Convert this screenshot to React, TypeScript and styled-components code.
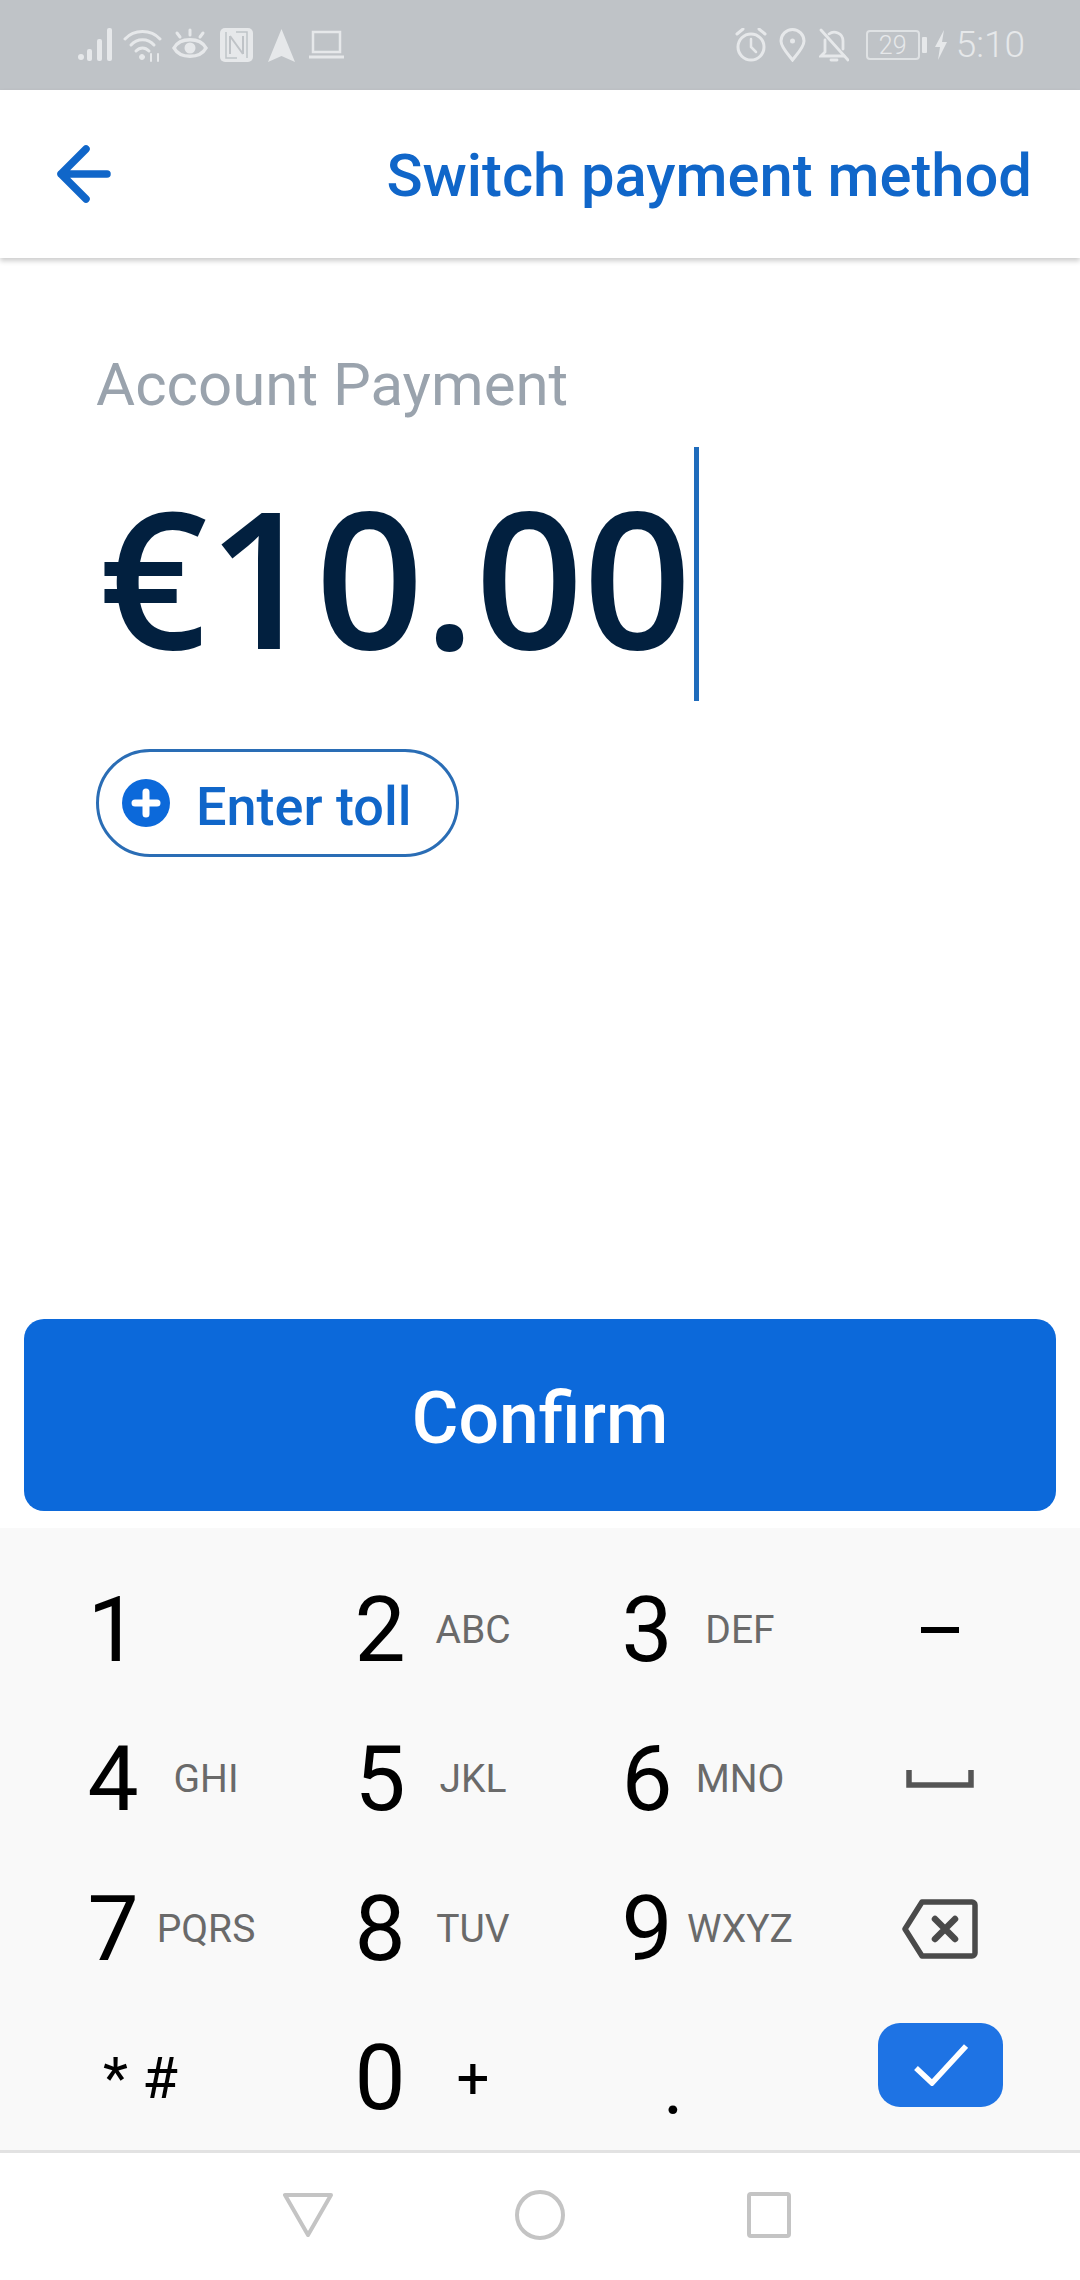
import React from "react";
import styled, { createGlobalStyle } from "styled-components";

const Global = createGlobalStyle`
  html, body { margin: 0; padding: 0; background: #fff; }
  * { box-sizing: border-box; }
  body { font-family: Roboto, "Liberation Sans", sans-serif; }
`;

const Page = styled.div`
  width: 1080px;
  height: 2280px;
  display: flex;
  flex-direction: column;
  overflow: hidden;
  background: #fff;
`;

const StatusBar = styled.div`
  height: 90px;
  flex: none;
  background: #bfc3c7;
  display: flex;
  align-items: center;
  justify-content: space-between;
  padding: 0 55px 0 78px;
  color: #e6e8ea;
`;

const StatusGroup = styled.div`
  display: flex;
  align-items: center;
  height: 36px;
`;

const StatusIcon = styled.svg<{ $ml?: number }>`
  display: block;
  flex: none;
  margin-left: ${(p) => p.$ml ?? 0}px;
`;

const Battery = styled.div`
  width: 54px;
  height: 30px;
  margin-left: 17px;
  border: 2px solid #dfe2e4;
  border-radius: 4px;
  display: flex;
  align-items: center;
  justify-content: center;
  font-size: 25px;
  font-weight: 300;
  color: #e6e8ea;
`;

const BatteryNub = styled.div`
  width: 5px;
  height: 16px;
  margin-left: 2px;
  background: #e6e8ea;
  border-radius: 1px;
`;

const Clock = styled.div`
  margin-left: 9px;
  font-size: 37px;
  font-weight: 300;
  line-height: 36px;
  color: #e6e8ea;
`;

const Header = styled.div`
  height: 168px;
  flex: none;
  display: flex;
  align-items: center;
  justify-content: space-between;
  padding: 0 48px 0 57px;
  box-shadow: 0 3px 5px rgba(0, 0, 0, 0.2);
  position: relative;
  background: #fff;
`;

const HeaderAction = styled.div`
  font-size: 59.7px;
  font-weight: 500;
  color: #1066c9;
  line-height: 64px;
  margin-top: 3px;
`;

const Main = styled.div`
  flex: 1;
  display: flex;
  flex-direction: column;
  align-items: flex-start;
  padding: 95px 0 0 96px;
`;

const AccountLabel = styled.div`
  font-size: 60px;
  line-height: 64px;
  font-weight: 400;
  color: #9aa3ad;
`;

const AmountRow = styled.div`
  display: flex;
  align-items: flex-start;
  margin-top: 30px;
  height: 254px;
`;

const Amount = styled.div`
  font-family: "Open Sans", "Noto Sans", sans-serif;
  font-size: 190px;
  font-weight: 600;
  line-height: 254px;
  color: #02203f;
  margin-left: 3px;
  letter-spacing: -0.5px;
  margin-top: 2px;
`;

const Caret = styled.div`
  width: 5px;
  height: 254px;
  background: #1f6cbc;
  margin-left: 3px;
`;

const TollPill = styled.div`
  margin-top: 48px;
  width: 363px;
  height: 108px;
  border: 3px solid #2a6db5;
  border-radius: 54px;
  display: flex;
  align-items: center;
  padding-left: 23px;
  gap: 26px;
`;

const TollLabel = styled.div`
  font-size: 54px;
  font-weight: 500;
  color: #1066c9;
  line-height: 60px;
  margin-top: 7px;
`;

const ConfirmWrap = styled.div`
  flex: none;
  padding: 0 24px;
  height: 209px;
`;

const ConfirmButton = styled.div`
  height: 192px;
  background: #0c69da;
  border-radius: 20px;
  display: flex;
  align-items: center;
  justify-content: center;
  color: #fff;
  font-size: 71.5px;
  font-weight: 500;
  padding-top: 6px;
`;

const Keypad = styled.div`
  flex: none;
  height: 622px;
  background: #f9f9f9;
  padding: 27px 0 0 66px;
  display: grid;
  grid-template-columns: 267px 267px 267px 146px;
  grid-auto-rows: 149.5px;
`;

const Key = styled.div`
  display: grid;
  grid-template-columns: 94px 92px;
  align-items: center;
  justify-items: center;
`;

const Digit = styled.div`
  font-size: 91px;
  line-height: 100px;
  color: #000;
`;

const Letters = styled.div<{ $symbol?: boolean }>`
  font-size: ${(p) => (p.$symbol ? 58 : 39)}px;
  color: ${(p) => (p.$symbol ? "#000" : "#6a6a6a")};
  line-height: 60px;
  white-space: nowrap;
`;

const SymbolKey = styled.div<{ $pl: number; $pt?: number; $size?: number }>`
  display: flex;
  align-items: center;
  padding-left: ${(p) => p.$pl}px;
  padding-top: ${(p) => p.$pt ?? 0}px;
  font-size: ${(p) => p.$size ?? 58}px;
  color: #000;
  white-space: nowrap;
`;

const ActionKey = styled.div`
  display: flex;
  align-items: center;
  justify-content: center;
`;

const EnterButton = styled.div`
  width: 125px;
  height: 84px;
  margin: 0 0 26px 1px;
  background: #1e73e4;
  border-radius: 22px;
  display: flex;
  align-items: center;
  justify-content: center;
`;

const NavBar = styled.div`
  flex: none;
  height: 130px;
  border-top: 3px solid #e2e2e2;
  display: flex;
  align-items: center;
  justify-content: center;
  gap: 182px;
  padding: 0 6px 3px 0;
`;

const keys = [
  ["1", ""],
  ["2", "ABC"],
  ["3", "DEF"],
];
const keys2 = [
  ["4", "GHI"],
  ["5", "JKL"],
  ["6", "MNO"],
];
const keys3 = [
  ["7", "PQRS"],
  ["8", "TUV"],
  ["9", "WXYZ"],
];

const Row = ({ items }: { items: string[][] }) => (
  <>
    {items.map(([d, l]) => (
      <Key key={d}>
        <Digit>{d}</Digit>
        <Letters>{l}</Letters>
      </Key>
    ))}
  </>
);

export default function App() {
  return (
    <Page>
      <Global />
      <StatusBar>
        <StatusGroup>
          <StatusIcon width="35" height="34" viewBox="0 0 35 34" fill="#e6e8ea">
            <circle cx="3" cy="29" r="3" />
            <rect x="9" y="21" width="5" height="12" rx="2" />
            <rect x="19" y="11" width="5" height="22" rx="2" />
            <rect x="29" y="0" width="5" height="33" rx="2" />
          </StatusIcon>
          <StatusIcon $ml={10} width="39" height="34" viewBox="0 0 39 34" fill="none" stroke="#e6e8ea" strokeWidth="3" strokeLinecap="round">
            <path d="M2 11 C11 1 28 1 37 11" />
            <path d="M8 17 C14 10 25 10 31 17" />
            <path d="M13 23 C17 19 22 19 26 23" />
            <circle cx="19" cy="29" r="2.5" fill="#e6e8ea" strokeWidth="1" />
            <path d="M28 26 v7 M35 26 v7" strokeWidth="2" />
          </StatusIcon>
          <StatusIcon $ml={10} width="36" height="34" viewBox="0 0 36 34" fill="none" stroke="#e6e8ea" strokeWidth="3.5" strokeLinecap="round">
            <path d="M2 20 C8 9 28 9 34 20 C28 31 8 31 2 20 Z" />
            <circle cx="18" cy="20" r="5.5" fill="#e6e8ea" strokeWidth="0" />
            <path d="M18 7 V2 M8 9 L5 5 M28 9 L31 5" strokeWidth="3" />
          </StatusIcon>
          <StatusIcon $ml={12} width="33" height="34" viewBox="0 0 33 34">
            <rect x="0" y="0" width="33" height="34" rx="5" fill="#e6e8ea" />
            <path d="M10 8 V26 M10 8 L23 26 M23 8 V26" stroke="#bfc3c7" strokeWidth="2" fill="none" />
            <path d="M6 4 V30 H17 M27 30 V4 H16" stroke="#bfc3c7" strokeWidth="1.5" fill="none" />
          </StatusIcon>
          <StatusIcon $ml={15} width="27" height="33" viewBox="0 0 27 33" fill="#e6e8ea">
            <path d="M13.5 0 L27 33 L13.5 27 L0 33 Z" />
          </StatusIcon>
          <StatusIcon $ml={14} width="35" height="30" viewBox="0 0 35 30" fill="none" stroke="#e6e8ea" strokeWidth="2.5">
            <rect x="4" y="2" width="27" height="20" />
            <path d="M0 27 H35" strokeWidth="3" />
          </StatusIcon>
        </StatusGroup>
        <StatusGroup>
          <StatusIcon width="32" height="34" viewBox="0 0 32 34" fill="none" stroke="#e6e8ea" strokeWidth="3" strokeLinecap="round">
            <circle cx="16" cy="19" r="13" />
            <path d="M16 11 V19 L21 24" strokeWidth="2.5" />
            <path d="M2 6 L8 1 M30 6 L24 1" />
          </StatusIcon>
          <StatusIcon $ml={12} width="27" height="34" viewBox="0 0 27 34" fill="none" stroke="#e6e8ea" strokeWidth="3">
            <path d="M13.5 32 C8 25 2 19 2 13 A11.5 11.5 0 0 1 25 13 C25 19 19 25 13.5 32 Z" />
            <circle cx="13.5" cy="13" r="2.5" fill="#e6e8ea" strokeWidth="0" />
          </StatusIcon>
          <StatusIcon $ml={13} width="30" height="34" viewBox="0 0 30 34" fill="none" stroke="#e6e8ea" strokeWidth="2.8" strokeLinecap="round">
            <path d="M6 12 V24 L2 28 H25 M10 6 C15 2 24 5 24 13 V21" />
            <path d="M12 32 H18" />
            <path d="M2 2 L29 32" />
          </StatusIcon>
          <Battery>29</Battery>
          <BatteryNub />
          <StatusIcon $ml={8} width="12" height="30" viewBox="0 0 12 30" fill="#e6e8ea">
            <path d="M9 0 L0 17 H5 L3 30 L12 12 H7 Z" />
          </StatusIcon>
          <Clock>5:10</Clock>
        </StatusGroup>
      </StatusBar>

      <Header>
        <svg width="54" height="58" viewBox="0 0 54 58" fill="none" stroke="#1066c9" strokeWidth="7.5" strokeLinecap="round" strokeLinejoin="round">
          <path d="M50 29 H4 M29 4 L4 29 L29 54" />
        </svg>
        <HeaderAction>Switch payment method</HeaderAction>
      </Header>

      <Main>
        <AccountLabel>Account Payment</AccountLabel>
        <AmountRow>
          <Amount>€10.00</Amount>
          <Caret />
        </AmountRow>
        <TollPill>
          <svg width="48" height="48" viewBox="0 0 48 48">
            <circle cx="24" cy="24" r="24" fill="#0c69da" />
            <path d="M24 13 V35 M13 24 H35" stroke="#fff" strokeWidth="7" strokeLinecap="round" />
          </svg>
          <TollLabel>Enter toll</TollLabel>
        </TollPill>
      </Main>

      <ConfirmWrap>
        <ConfirmButton>Confirm</ConfirmButton>
      </ConfirmWrap>

      <Keypad>
        <Row items={keys} />
        <ActionKey>
          <svg width="40" height="8" viewBox="0 0 40 8">
            <rect x="1" y="1" width="38" height="6" fill="#000" />
          </svg>
        </ActionKey>
        <Row items={keys2} />
        <ActionKey>
          <svg width="68" height="20" viewBox="0 0 68 20" fill="none" stroke="#555" strokeWidth="5.5">
            <path d="M3 1 V16 H65 V1" />
          </svg>
        </ActionKey>
        <Row items={keys3} />
        <ActionKey>
          <svg width="76" height="60" viewBox="0 0 76 60" fill="none" stroke="#4a4a4a" strokeWidth="5.5" strokeLinejoin="round" strokeLinecap="round">
            <path d="M20 3 H70 A3 3 0 0 1 73 6 V54 A3 3 0 0 1 70 57 H20 L3 30 Z" />
            <path d="M33 20 L53 40 M53 20 L33 40" strokeWidth="6.5" />
          </svg>
        </ActionKey>
        <SymbolKey $pl={37}>* #</SymbolKey>
        <Key>
          <Digit>0</Digit>
          <Letters $symbol>+</Letters>
        </Key>
        <SymbolKey $pl={63} $pt={18} $size={78}>.</SymbolKey>
        <ActionKey>
          <EnterButton>
            <svg width="54" height="42" viewBox="0 0 54 42" fill="none" stroke="#fff" strokeWidth="5.5">
              <path d="M2 24 L18 39 L52 2" />
            </svg>
          </EnterButton>
        </ActionKey>
      </Keypad>

      <NavBar>
        <svg width="50" height="44" viewBox="0 0 50 44" fill="none" stroke="#c4c4c4" strokeWidth="4" strokeLinejoin="round">
          <path d="M2 2 H48 L25 42 Z" />
        </svg>
        <svg width="50" height="50" viewBox="0 0 50 50" fill="none" stroke="#c4c4c4" strokeWidth="4">
          <circle cx="25" cy="25" r="23" />
        </svg>
        <svg width="44" height="46" viewBox="0 0 44 46" fill="none" stroke="#c4c4c4" strokeWidth="4" strokeLinejoin="round">
          <rect x="2" y="2" width="40" height="42" rx="2" />
        </svg>
      </NavBar>
    </Page>
  );
}
